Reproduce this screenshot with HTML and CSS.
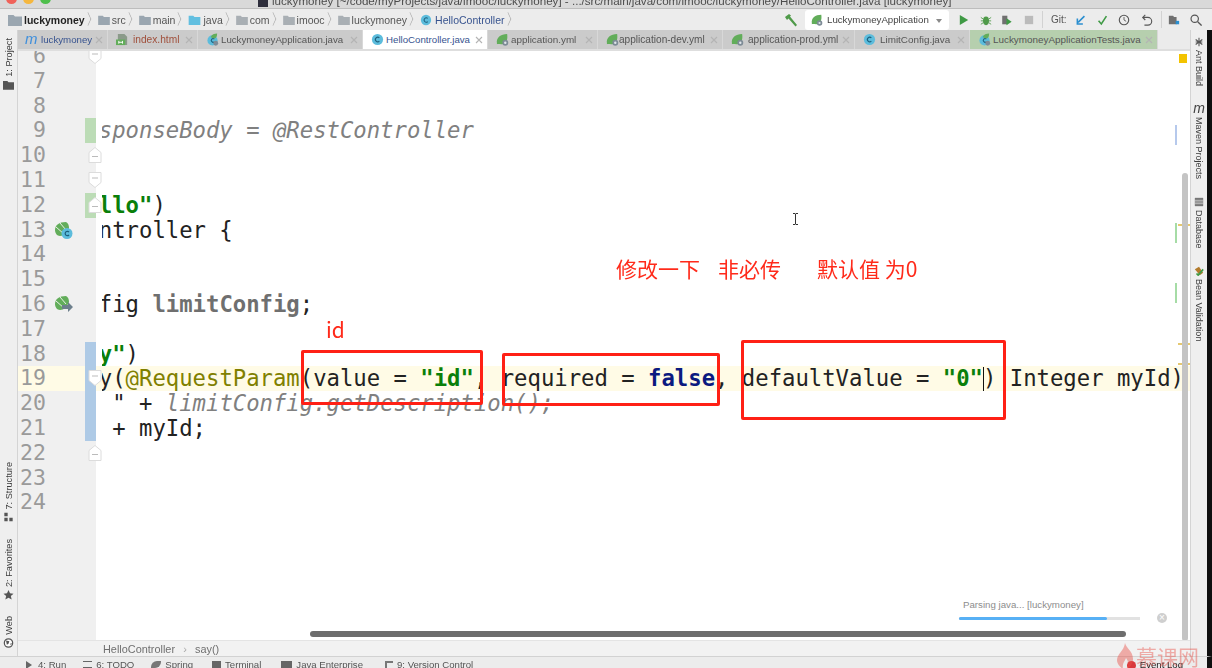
FILE: index.html
```html
<!DOCTYPE html>
<html lang="en">
<head>
<meta charset="utf-8">
<title>HelloController.java</title>
<link rel="stylesheet" href="styles.css">
</head>
<body>
<svg class="defs" width="0" height="0" aria-hidden="true">
  <symbol id="folder" viewBox="0 0 14 12"><path d="M0 1h5.500l1.500 1.500h7v9.500h-14z"/></symbol>
  <symbol id="cls" viewBox="0 0 14 14"><circle cx="7" cy="7" r="6" fill="#5cbcdc"/><path d="M9 5.200a2.500 2.500 0 1 0 0 3.600" fill="none" stroke="#1c5f7c" stroke-width="1.200"/></symbol>
  <symbol id="leaf" viewBox="0 0 14 14"><path d="M1 11C0 5 5 1 12 1c1 6-1 11-6 11-2 0-4-.500-5 0z" fill="#62ad5a"/><circle cx="10" cy="10.500" r="3.200" fill="#7d8b96"/><circle cx="10" cy="10.500" r="1.300" fill="#dfe5ea"/></symbol>
  <symbol id="spring-c" viewBox="0 0 14 14"><circle cx="7" cy="8" r="5.500" fill="#5cbcdc"/><path d="M9 6.500a2 2 0 1 0 0 3" fill="none" stroke="#1c5f7c" stroke-width="1.100"/><path d="M5 4.500C6 1.500 9 .500 12 .500c0 3-1 5-3 5.500z" fill="#62ad5a"/><circle cx="10.500" cy="11" r="2.600" fill="#7d8b96"/></symbol>
  <symbol id="fold-down" viewBox="0 0 14 16"><path d="M1 .500h12v10l-6 5-6-5z" fill="#fff" stroke="#dcdcdc"/><path d="M4 6h6" stroke="#bbb"/></symbol>
  <symbol id="fold-up" viewBox="0 0 14 16"><path d="M1 15.500h12v-10l-6-5-6 5z" fill="#fff" stroke="#dcdcdc"/><path d="M4 9.500h6" stroke="#bbb"/></symbol>
  <symbol id="x" viewBox="0 0 8 8"><path d="M1 1l6 6M7 1l-6 6" stroke="#b4b4b4" stroke-width="1.100" fill="none"/></symbol>
</svg>

<div class="app">
  <header class="title soft">
    <i class="light light-red"></i><i class="light light-orange"></i><i class="light light-green"></i>
    <span class="title-text"><b class="title-icon"></b>luckymoney [~/code/myProjects/java/imooc/luckymoney] - .../src/main/java/com/imooc/luckymoney/HelloController.java [luckymoney]</span>
  </header>

  <nav class="nav soft">
    <div class="crumb crumb-root"><svg class="ic-folder root"><use href="#folder"/></svg><b>luckymoney</b></div>
    <div class="crumb"><svg class="ic-folder"><use href="#folder"/></svg>src</div>
    <div class="crumb"><svg class="ic-folder"><use href="#folder"/></svg>main</div>
    <div class="crumb"><svg class="ic-folder blue"><use href="#folder"/></svg>java</div>
    <div class="crumb"><svg class="ic-folder pale"><use href="#folder"/></svg>com</div>
    <div class="crumb"><svg class="ic-folder pale"><use href="#folder"/></svg>imooc</div>
    <div class="crumb"><svg class="ic-folder pale"><use href="#folder"/></svg>luckymoney</div>
    <div class="crumb crumb-file"><svg class="ic-c"><use href="#cls"/></svg>HelloController</div>
    <div class="crumb-end"></div>

    <div class="tools">
      <svg class="tool hammer" viewBox="0 0 14 14"><path d="M1 4l4-3 2 1.500-1 1L13 12l-1.500 1.500L4.500 5.500 3 7z" fill="#4f9a49"/></svg>
      <div class="run-config"><svg class="ic-c"><use href="#leaf"/></svg><span>LuckymoneyApplication</span><i class="caret"></i></div>
      <svg class="tool play" viewBox="0 0 12 12"><path d="M1 0l10 6-10 6z" fill="#3f9a45"/></svg>
      <svg class="tool bug" viewBox="0 0 14 14"><ellipse cx="7" cy="8" rx="3.500" ry="5" fill="#4f9a49"/><path d="M1 4l3 2M13 4l-3 2M1 8h3M10 8h3M1 12l3-2M13 12l-3-2" stroke="#4f9a49"/></svg>
      <svg class="tool cover" viewBox="0 0 14 14"><path d="M2 2h6v10H2z" fill="#707070"/><path d="M7 5l6 4-6 4z" fill="#3f9a45"/></svg>
      <svg class="tool stop" viewBox="0 0 12 12"><rect x="1" y="1" width="10" height="10" fill="#bbb"/></svg>
      <i class="sep"></i>
      <span class="git">Git:</span>
      <svg class="tool vcs-up" viewBox="0 0 14 14"><path d="M12 2L4 10M3 5v7h7" fill="none" stroke="#2b8fd0" stroke-width="2"/></svg>
      <svg class="tool vcs-ok" viewBox="0 0 14 14"><path d="M2 8l3.500 4L12 2" fill="none" stroke="#3f9a45" stroke-width="2"/></svg>
      <svg class="tool vcs-his" viewBox="0 0 14 14"><circle cx="7" cy="7" r="5.500" fill="none" stroke="#555" stroke-width="1.300"/><path d="M7 3.500V7l2.500 1.500" fill="none" stroke="#555"/></svg>
      <svg class="tool vcs-undo" viewBox="0 0 14 14"><path d="M5 1L2 4l3 3M2 4h6a4 4 0 0 1 0 9H4" fill="none" stroke="#555" stroke-width="1.300"/></svg>
      <i class="sep"></i>
      <svg class="tool project" viewBox="0 0 14 14"><path d="M1 2h5l1 1.500h3V12H1z" fill="#707070"/><path d="M9 8h4v4H9z" fill="#2b8fd0"/></svg>
      <svg class="tool search" viewBox="0 0 14 14"><circle cx="5.500" cy="5.500" r="4.300" fill="none" stroke="#555" stroke-width="1.400"/><path d="M9 9l4.500 4.500" stroke="#555" stroke-width="1.500"/></svg>
    </div>
  </nav>

  <div class="main soft">
    <aside class="stripe stripe-left">
      <div class="side-item side-project"><span>1: Project</span><svg class="side-ic"><use href="#folder"/></svg></div>
      <div class="grow"></div>
      <div class="side-item"><span>7: Structure</span><svg class="side-ic" viewBox="0 0 12 12"><path d="M1 1h4v4H1zM1 7h4v4H1zM7 7h4v4H7z" fill="#555"/></svg></div>
      <div class="side-item side-fav"><span>2: Favorites</span><svg class="side-ic" viewBox="0 0 12 12"><path d="M6 0l1.800 4 4.200.400-3.200 2.800 1 4.300L6 9.200 2.200 11.500l1-4.300L0 4.400 4.200 4z" fill="#555"/></svg></div>
      <div class="side-item side-web"><span>Web</span><svg class="side-ic" viewBox="0 0 12 12"><circle cx="6" cy="6" r="5" fill="#fff" stroke="#555" stroke-width="1.500"/><path d="M3 3l4 1-1 3-2 1zM8 7l2-1-1 3z" fill="#555"/></svg></div>
    </aside>

    <div class="center">
      <div class="tabs">
        <div class="tab tab-1 t-blue"><b class="tab-m">m</b><span>luckymoney</span><svg class="tab-x"><use href="#x"/></svg></div>
        <div class="tab tab-2 t-red"><svg class="tab-ic" viewBox="0 0 14 14"><path d="M2 1h7l3 3v9H2z" fill="#8b9a8a"/><rect x="0" y="7" width="10" height="6" fill="#62ad5a"/><path d="M3 8.500v3M7 8.500v3M3 10h4" stroke="#fff"/></svg><span>index.html</span><svg class="tab-x"><use href="#x"/></svg></div>
        <div class="tab tab-3"><svg class="tab-ic"><use href="#spring-c"/></svg><span>LuckymoneyApplication.java</span><svg class="tab-x"><use href="#x"/></svg></div>
        <div class="tab tab-4 t-blue tab-active"><svg class="tab-ic"><use href="#cls"/></svg><span>HelloController.java</span><svg class="tab-x"><use href="#x"/></svg></div>
        <div class="tab tab-5"><svg class="tab-ic"><use href="#leaf"/></svg><span>application.yml</span><svg class="tab-x"><use href="#x"/></svg></div>
        <div class="tab tab-6"><svg class="tab-ic"><use href="#leaf"/></svg><span>application-dev.yml</span><svg class="tab-x"><use href="#x"/></svg></div>
        <div class="tab tab-7"><svg class="tab-ic"><use href="#leaf"/></svg><span>application-prod.yml</span><svg class="tab-x"><use href="#x"/></svg></div>
        <div class="tab tab-8"><svg class="tab-ic"><use href="#cls"/></svg><span>LimitConfig.java</span><svg class="tab-x"><use href="#x"/></svg></div>
        <div class="tab tab-9 tab-test"><svg class="tab-ic"><use href="#spring-c"/></svg><span>LuckymoneyApplicationTests.java</span><svg class="tab-x"><use href="#x"/></svg></div>
        <div class="tabs-rest"></div>
      </div>

      <section class="pane">
        <div class="lines">
          <div class="row"><span class="num">6</span><svg class="fold"><use href="#fold-down"/></svg></div>
          <div class="row"><span class="num">7</span></div>
          <div class="row"><span class="num">8</span></div>
          <div class="row"><span class="num mark-green">9</span><code class="code i-gray">sponseBody = @RestController</code></div>
          <div class="row"><span class="num">10</span><svg class="fold"><use href="#fold-up"/></svg></div>
          <div class="row"><span class="num">11</span><svg class="fold"><use href="#fold-down"/></svg></div>
          <div class="row"><span class="num mark-green">12</span><svg class="fold"><use href="#fold-up"/></svg><code class="code"><b class="str">llo"</b>)</code></div>
          <div class="row"><span class="num">13</span><svg class="gut-ic" viewBox="0 0 19 19"><path d="M1 9C1 4 5 1 12 1c2 1 3 3 3 6-2 5-5 8-9 8-3 0-5-3-5-6z" fill="#62ad5a"/><path d="M2 6l8 7M6 2l6 7" stroke="#e8f2e6" stroke-width="1"/><circle cx="13" cy="12.500" r="5.500" fill="#5cbcdc"/><path d="M15 11a2.200 2.200 0 1 0 0 3" fill="none" stroke="#1c5f7c" stroke-width="1.200"/></svg><code class="code">ntroller {</code></div>
          <div class="row"><span class="num">14</span></div>
          <div class="row"><span class="num">15</span></div>
          <div class="row"><span class="num">16</span><svg class="gut-ic" viewBox="0 0 19 19"><path d="M1 9C1 4 5 1 12 1c2 1 3 3 3 6-2 5-5 8-9 8-3 0-5-3-5-6z" fill="#62ad5a"/><path d="M2 6l8 7M6 2l6 7" stroke="#e8f2e6" stroke-width="1"/><path d="M8 10h6V7l5 5-5 5v-3H8z" fill="#6d7f8c"/></svg><code class="code">fig <b class="field">limitConfig</b>;</code></div>
          <div class="row"><span class="num">17</span></div>
          <div class="row"><span class="num mark-blue">18</span><code class="code"><b class="str">y"</b>)</code></div>
          <div class="row row-current"><span class="num mark-blue">19</span><svg class="fold"><use href="#fold-down"/></svg><code class="code">y(<span class="anno">@RequestParam</span>(value = <b class="str">"id"</b>, required = <b class="kw">false</b>, defaultValue = <b class="str">"0"</b><i class="caret-line"></i>) Integer myId)</code></div>
          <div class="row"><span class="num mark-blue">20</span><code class="code"> " + <em class="i-gray">limitConfig.getDescription();</em></code></div>
          <div class="row"><span class="num mark-blue">21</span><code class="code"> + myId;</code></div>
          <div class="row"><span class="num">22</span><svg class="fold"><use href="#fold-up"/></svg></div>
          <div class="row"><span class="num">23</span></div>
          <div class="row"><span class="num">24</span></div>
        </div>

        <i class="err-top"></i>
        <i class="stripe-mark sm-blue"></i><i class="stripe-mark sm-g1"></i><i class="stripe-mark sm-g2"></i>
        <i class="tick tick-1"></i><i class="tick tick-2"></i><i class="tick tick-3"></i>
        <i class="vscroll"></i>
        <i class="hscroll"></i>

        <div class="progress">
          <div class="progress-label">Parsing java... [luckymoney]</div>
          <div class="progress-row"><div class="progress-track"><div class="progress-fill"></div></div><i class="progress-x">×</i></div>
        </div>
      </section>

      <div class="crumbs"><span>HelloController</span><i>›</i><span>say()</span></div>
    </div>

    <aside class="stripe stripe-right">
      <div class="rside"><svg class="rside-ic" viewBox="0 0 12 12"><path d="M6 1v10M2 3l8 6M10 3l-8 6M2 6h8" stroke="#555" stroke-width="1.300"/></svg><span>Ant Build</span></div>
      <div class="rside rside-m"><b class="rside-mark">m</b><span>Maven Projects</span></div>
      <div class="rside rside-db"><svg class="rside-ic" viewBox="0 0 12 12"><path d="M1 1h10v10H1z" fill="#777"/><path d="M1 4h10M1 6h10M1 8h10" stroke="#eee" stroke-width=".7"/></svg><span>Database</span></div>
      <div class="rside rside-bean"><svg class="rside-ic" viewBox="0 0 12 12"><path d="M1 4l5-3 5 7-4 3z" fill="#b37b2c"/><path d="M3 9l2 2 6-7" fill="none" stroke="#3f9a45" stroke-width="2"/></svg><span>Bean Validation</span></div>
    </aside>
    <div class="edge"></div>
  </div>

  <footer class="status soft">
    <div class="st st-run"><i class="st-play"></i>4: Run</div>
    <div class="st st-todo"><i class="st-list"></i>6: TODO</div>
    <div class="st st-spring"><i class="st-leaf"></i>Spring</div>
    <div class="st st-term"><i class="st-box"></i>Terminal</div>
    <div class="st st-java"><i class="st-box st-box-wide"></i>Java Enterprise</div>
    <div class="st st-vcs"><i class="st-branch"></i>9: Version Control</div>
    <div class="grow"></div>
    <div class="st st-event"><i class="st-dot"></i>Event Log</div>
  </footer>

  <div class="note note-id">id</div>
  <div class="note note-a">修改一下</div>
  <div class="note note-b">非必传</div>
  <div class="note note-c">默认值 为0</div>
  <i class="box box-1"></i><i class="box box-2"></i><i class="box box-3"></i>
  <svg class="ibeam" viewBox="0 0 7 12"><path d="M1 .500h2l.500.500.500-.500h2M3.500 1v10M1 11.500h2l.500-.500.500.500h2" fill="none" stroke="#333"/></svg>
  <div class="watermark"><svg class="flame" viewBox="0 0 16 26"><path d="M8 0c1 5 8 8 8 16 0 5-3 9-7 10 3-3 3-7 0-11-1 3-4 5-3 11-3-2-6-5-6-9 0-6 7-9 8-17z" fill="#e9534a"/></svg><span>慕课网</span></div>
</div>
</body>
</html>
```
FILE: styles.css
```css
* { box-sizing: border-box; }
html, body { margin: 0; padding: 0; height: 100%; overflow: hidden; background: #000; }
.defs { position: absolute; }
i { font-style: normal; display: block; }
.grow { flex: 1; }
.soft { filter: blur(.35px); }

.app {
  position: relative;
  width: 1212px;
  height: 668px;
  display: flex;
  flex-direction: column;
  overflow: hidden;
  font-family: "Liberation Sans", Arial, sans-serif;
  color: #4a4a4a;
  background: #ececec;
}

/* window title */
.title {
  position: relative;
  height: 9px;
  flex: none;
  background: #d9d9d9;
  border-bottom: 1px solid #bdbdbd;
  overflow: hidden;
}
.light { position: absolute; top: -7px; width: 11px; height: 11px; border-radius: 50%; }
.light-red { left: 6px; background: #f0625a; }
.light-orange { left: 23px; background: #f5b73f; }
.light-green { left: 40px; background: #4fbf4c; }
.title-text {
  position: absolute;
  left: 258px;
  top: -7px;
  display: flex;
  align-items: center;
  gap: 4px;
  font-size: 11.600px;
  line-height: 15px;
  white-space: nowrap;
  color: #4c4c4c;
}
.title-icon { width: 10px; height: 12px; background: #2e2e3c; }

/* navigation bar */
.nav {
  height: 21px;
  flex: none;
  display: flex;
  align-items: center;
  padding-left: 8px;
  background: #ececec;
  font-size: 10.500px;
  color: #555;
}
.crumb {
  display: flex;
  align-items: center;
  gap: 2px;
  height: 100%;
  padding-right: 13px;
  position: relative;
  white-space: nowrap;
}
.crumb::after {
  content: "";
  position: absolute;
  right: 5px;
  top: 5px;
  width: 9px;
  height: 9px;
  border-top: 1px solid #a8a8a8;
  border-right: 1px solid #a8a8a8;
  transform: scaleX(.45) rotate(45deg);
}
.crumb b { color: #222; }
.ic-folder { width: 12px; height: 10px; fill: #9aa6b0; }
.ic-folder.root { width: 14px; height: 12px; }
.ic-folder.blue { fill: #62bfe0; width: 13px; }
.ic-folder.pale { fill: #a9afb4; }
.ic-c { width: 12px; height: 12px; margin-right: 1px; }
.crumb-file { color: #37538f; }
.crumb-end { flex: 1; }
.tools { display: flex; align-items: center; height: 100%; padding-right: 10px; }
.tool { width: 12px; height: 12px; flex: none; }
.hammer { width: 14px; height: 14px; }
.run-config {
  width: 144px;
  height: 20px;
  margin-left: 7px;
  display: flex;
  align-items: center;
  padding-left: 6px;
  background: #fff;
  border-radius: 3px;
  font-size: 9.700px;
  color: #444;
  position: relative;
}
.run-config .ic-c { margin-right: 4px; }
.caret { position: absolute; left: 131px; top: 9px; border: 3.500px solid transparent; border-top: 4px solid #8a8a8a; border-bottom: 0; }
.play { width: 10px; margin-left: 10px; }
.bug { margin-left: 11px; height: 14px; }
.cover { width: 13px; margin-left: 8px; }
.stop { width: 10px; margin-left: 11px; }
.sep { width: 1px; height: 17px; margin-left: 8px; background: #d2d2d2; }
.git { width: 16px; margin-left: 8px; font-size: 10px; white-space: nowrap; }
.vcs-up { width: 11px; margin-left: 8px; }
.vcs-ok { width: 11px; margin-left: 11px; }
.vcs-his { margin-left: 10px; }
.vcs-undo { margin-left: 11px; }
.project { margin-left: 6px; }
.search { margin-left: 10px; }

/* main row */
.main { flex: 1; min-height: 0; display: flex; }
.stripe {
  flex: none;
  display: flex;
  flex-direction: column;
  background: #efefef;
  font-size: 9.200px;
  color: #3c3c3c;
}
.stripe-left { width: 18px; border-right: 1px solid #d4d4d4; padding-top: 8px; padding-bottom: 8px; align-items: center; }
.side-item { display: flex; flex-direction: column; align-items: center; gap: 2px; }
.side-item span { writing-mode: vertical-rl; transform: rotate(180deg); white-space: nowrap; }
.side-ic { width: 11px; height: 10px; fill: #555; margin-top: 1px; }
.side-fav { margin-top: 17px; }
.side-web { margin-top: 16px; }
.stripe-right { width: 17px; border-left: 1px solid #d4d4d4; padding-top: 7px; align-items: center; font-size: 9px; }
.rside { display: flex; flex-direction: column; align-items: center; gap: 3px; }
.rside span { writing-mode: vertical-rl; white-space: nowrap; }
.rside-ic { width: 10px; height: 10px; }
.rside-mark { font-size: 14px; font-style: italic; font-weight: 400; line-height: 11px; color: #444; }
.rside-m { margin-top: 17px; }
.rside-db { margin-top: 18px; }
.rside-bean { margin-top: 17px; }
.edge { width: 5px; flex: none; background: #0f0f0f; }

.center { flex: 1; min-width: 0; display: flex; flex-direction: column; }

/* tabs */
.tabs {
  height: 21px;
  flex: none;
  display: flex;
  background: #cbcbcb;
  border-bottom: 2px solid #dedede;
  font-size: 9.900px;
  color: #555;
}
.tab {
  display: flex;
  align-items: center;
  position: relative;
  height: 19px;
  padding-left: 23px;
  white-space: nowrap;
  border-right: 1px solid #d8d8d8;
}
.tab-ic { position: absolute; left: 8px; top: 3px; width: 13px; height: 13px; }
.tab-m { position: absolute; left: 7px; top: 0; font-size: 15px; font-style: italic; font-weight: 400; color: #3f8fdc; line-height: 18px; }
.tab-x { position: absolute; right: 4px; top: 6px; width: 8px; height: 8px; }
.tab-1 { width: 90px; font-size: 9.700px; }
.tab-2 { width: 90px; padding-left: 25px; font-size: 10.200px; color: #a0503c; }
.tab-3 { width: 165px; font-size: 9.700px; }
.tab-4 { width: 125px; font-size: 9.700px; }
.tab-5 { width: 110px; }
.tab-6 { width: 125px; padding-left: 21px; font-size: 10.100px; }
.tab-7 { width: 132px; padding-left: 25px; font-size: 10.100px; }
.tab-8 { width: 115px; padding-left: 25px; }
.tab-9 { width: 188px; }
.t-blue { color: #37538f; }
.tab-active { background: #fff; }
.tab-test { background: #b6cfae; }
.tabs-rest { flex: 1; background: #ebebeb; }

/* editor */
.pane {
  position: relative;
  flex: 1;
  min-height: 0;
  overflow: hidden;
  background: linear-gradient(to right, #f0f0f0 78px, #fff 78px);
}
.lines { margin-top: -7px; }
.row { position: relative; height: 24.800px; display: flex; }
.row-current { background: linear-gradient(to right, #fffbe6 1172px, transparent 1172px); }
.num {
  flex: none;
  width: 78px;
  padding-right: 50px;
  text-align: right;
  font: 21.500px/24.800px "DejaVu Sans Mono", monospace;
  color: #9a9a9a;
}
.mark-green { border-right: 11px solid #bcdcb6; padding-right: 39px; }
.mark-blue { border-right: 11px solid #aecae6; padding-right: 39px; }
.code {
  display: block;
  margin-left: 6px;
  padding-left: 0;
  text-indent: -3.200px;
  width: 1084px;
  overflow: hidden;
  white-space: pre;
  font: 22.250px/24.800px "DejaVu Sans Mono", monospace;
  color: #222;
}
.i-gray { font-style: italic; color: #808080; }
.str { color: #0a7f0a; }
.field { color: #6f6f6f; }
.kw { color: #0b1a80; }
.anno { color: #808000; }
.caret-line { display: inline-block; width: 1px; height: 24px; margin-right: -1px; vertical-align: -5px; background: #111; }
.fold { position: absolute; left: 70px; top: 4px; width: 14px; height: 16px; z-index: 1; }
.gut-ic { position: absolute; left: 36px; top: 3px; width: 19px; height: 19px; }

.err-top { position: absolute; left: 1161px; top: 3px; width: 8px; height: 9px; background: #f3c300; }
.stripe-mark { position: absolute; left: 1157px; width: 2px; }
.sm-blue { top: 74px; height: 20px; background: #b6c9ec; }
.sm-g1 { top: 172px; height: 20px; background: #a6dca6; }
.sm-g2 { top: 232px; height: 20px; background: #a6dca6; }
.tick { position: absolute; left: 1160px; width: 12px; height: 2px; background: #e5c870; }
.tick-1 { top: 173px; }
.tick-2 { top: 292px; }
.tick-3 { top: 312px; }
.vscroll { position: absolute; left: 1164px; top: 122px; width: 6px; height: 468px; border-radius: 3px; background: #c4c4c4; }
.hscroll { position: absolute; left: 292px; top: 580px; width: 816px; height: 6px; border-radius: 3px; background: #6d6d6d; }

.progress { position: absolute; left: 941px; top: 548px; width: 215px; color: #8d8d8d; }
.progress-label { padding-left: 4px; font-size: 9.700px; line-height: 12px; }
.progress-row { display: flex; align-items: center; margin-top: 2px; }
.progress-track { width: 181px; height: 3px; background: #e2e2e2; }
.progress-fill { width: 81.500%; height: 100%; background: #57b0f5; border-radius: 2px; }
.progress-x {
  width: 10px;
  height: 10px;
  margin-left: 17px;
  border-radius: 50%;
  background: #cfcfcf;
  color: #fff;
  font-size: 10px;
  line-height: 10px;
  text-align: center;
}

.crumbs {
  height: 16px;
  flex: none;
  display: flex;
  align-items: center;
  padding-left: 85px;
  background: #f2f2f2;
  border-top: 1px solid #e4e4e4;
  font-size: 10.900px;
  color: #707070;
}
.crumbs i { width: 20px; text-align: center; color: #aaa; }

/* tool window bar */
.status {
  height: 12px;
  flex: none;
  display: flex;
  overflow: hidden;
  background: #ececec;
  border-top: 1px solid #d2d2d2;
  border-right: 5px solid #0f0f0f;
  font-size: 9.600px;
  line-height: 12px;
  color: #555;
}
.st { display: flex; align-items: flex-start; white-space: nowrap; padding-top: 2px; }
.st i { flex: none; margin-top: 2px; }
.st-run { margin-left: 26px; }
.st-play { width: 0; height: 0; margin-right: 6px; border: 4px solid transparent; border-left: 6px solid #666; border-right: 0; }
.st-todo { margin-left: 17px; }
.st-list { width: 9px; height: 7px; margin-right: 4px; border-top: 1px solid #666; border-bottom: 1px solid #666; }
.st-spring { margin-left: 17px; }
.st-leaf { width: 10px; height: 7px; margin-right: 4px; border-radius: 6px 0; background: #777; }
.st-term { margin-left: 19px; }
.st-box { width: 9px; height: 8px; margin-right: 4px; background: #666; }
.st-box-wide { width: 11px; }
.st-java { margin-left: 20px; }
.st-vcs { margin-left: 22px; }
.st-branch { width: 8px; height: 8px; margin-right: 4px; border-left: 2px solid #777; border-top: 2px solid #777; }
.st-event { margin-right: 24px; color: #222; }
.st-dot { width: 9px; height: 9px; margin-right: 4px; border-radius: 50%; background: #d9383c; }

/* hand drawn annotations */
.note {
  position: absolute;
  color: #ff2a1a;
  font-family: "Noto Sans CJK SC", "Noto Sans", sans-serif;
  font-size: 21px;
  line-height: 26px;
  white-space: nowrap;
}
.note-id { left: 326px; top: 316px; }
.note-a { left: 616px; top: 255px; }
.note-b { left: 718px; top: 255px; }
.note-c { left: 817px; top: 255px; }
.box { position: absolute; border: 3px solid #ff2015; border-radius: 2px; }
.box-1 { left: 301px; top: 350px; width: 182px; height: 55px; }
.box-2 { left: 502px; top: 353px; width: 218px; height: 53px; }
.box-3 { left: 741px; top: 340px; width: 265px; height: 80px; }
.ibeam { position: absolute; left: 792px; top: 213px; width: 7px; height: 12px; }
.watermark {
  position: absolute;
  left: 1117px;
  top: 643px;
  display: flex;
  gap: 3px;
  opacity: .45;
  pointer-events: none;
}
.flame { width: 16px; height: 26px; }
.watermark span {
  font-family: "Noto Sans CJK SC", sans-serif;
  font-size: 21px;
  line-height: 26px;
  color: #e9534a;
}
```
